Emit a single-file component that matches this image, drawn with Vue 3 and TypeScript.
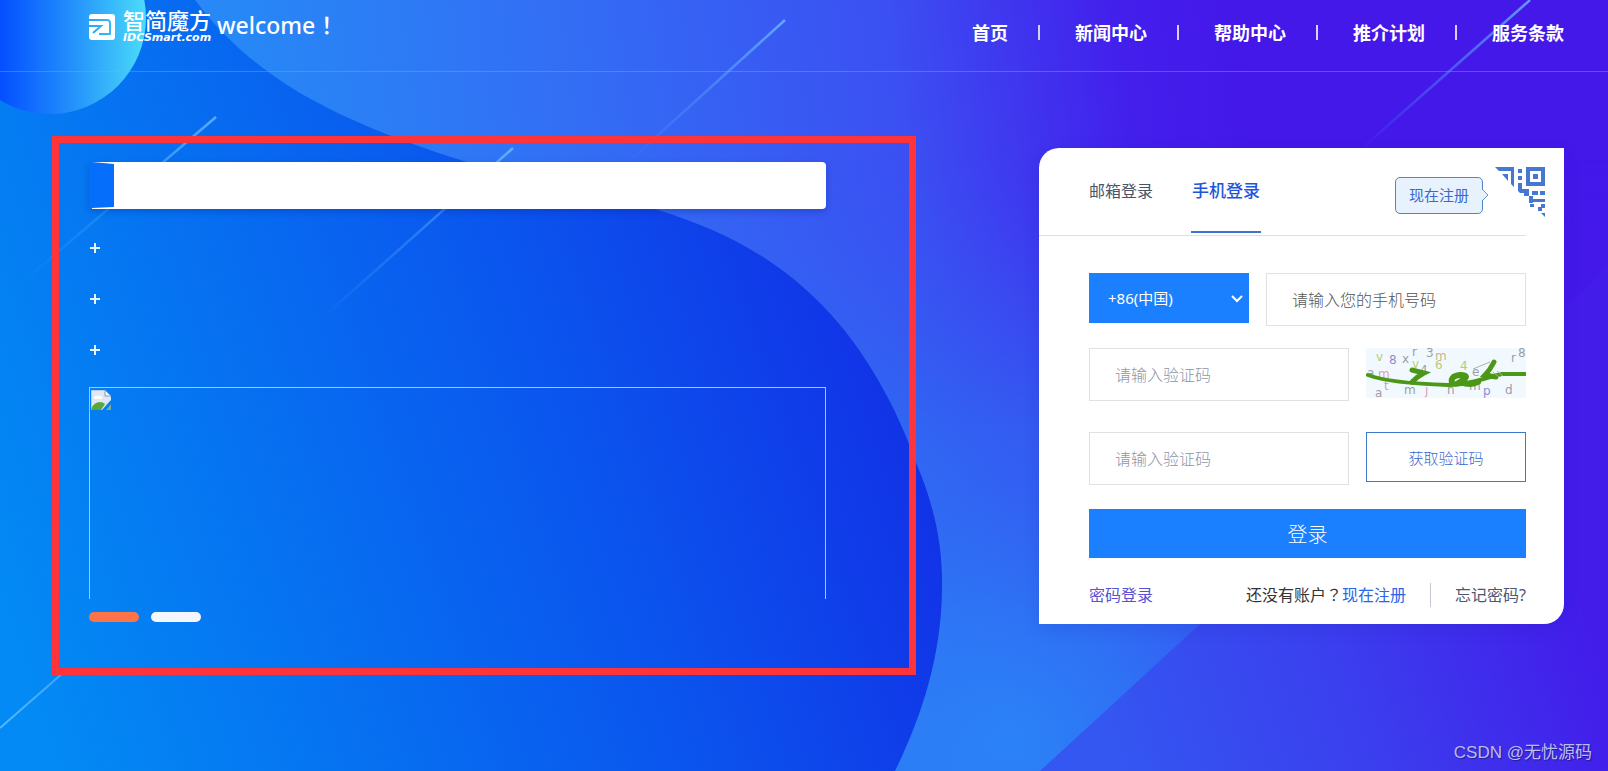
<script setup lang="ts">
import { ref } from 'vue'

const navItems: string[] = ['首页', '新闻中心', '帮助中心', '推介计划', '服务条款']
const features: number[] = [1, 2, 3]
const tab = ref<'email' | 'phone'>('phone')
const region = ref('86')
const phone = ref('')
const imageCode = ref('')
const smsCode = ref('')
const slide = ref(0)
</script>

<template>
  <div class="page">
    <svg class="backdrop" viewBox="0 0 1608 771" preserveAspectRatio="none" aria-hidden="true">
      <defs>
        <linearGradient id="sky" gradientUnits="userSpaceOnUse" x1="700" y1="800" x2="1350" y2="250">
          <stop offset="0" stop-color="#2491f8" />
          <stop offset="0.25" stop-color="#2b80f5" />
          <stop offset="0.42" stop-color="#2f6af3" />
          <stop offset="0.66" stop-color="#3753f1" />
          <stop offset="1" stop-color="#4319ea" />
        </linearGradient>
        <linearGradient id="skyTop" gradientUnits="userSpaceOnUse" x1="250" y1="150" x2="1240" y2="20">
          <stop offset="0" stop-color="#2788f6" />
          <stop offset="0.3" stop-color="#3270f5" />
          <stop offset="0.65" stop-color="#3b50f2" />
          <stop offset="0.88" stop-color="#431fec" />
          <stop offset="1" stop-color="#4318e9" />
        </linearGradient>
        <linearGradient id="fadeDown" x1="0" y1="0" x2="0" y2="1">
          <stop offset="0" stop-color="#fff" />
          <stop offset="0.2" stop-color="#fff" />
          <stop offset="0.55" stop-color="#000" />
        </linearGradient>
        <mask id="topMask"><rect width="1608" height="771" fill="url(#fadeDown)" /></mask>
        <linearGradient id="sea" gradientUnits="userSpaceOnUse" x1="0" y1="600" x2="880" y2="300">
          <stop offset="0" stop-color="#038af4" />
          <stop offset="0.3" stop-color="#0672f1" />
          <stop offset="0.65" stop-color="#0b54ee" />
          <stop offset="1" stop-color="#1231e6" />
        </linearGradient>
        <linearGradient id="corner" gradientUnits="userSpaceOnUse" x1="1100" y1="700" x2="1560" y2="540">
          <stop offset="0" stop-color="#3456f1" />
          <stop offset="0.5" stop-color="#3b3eee" />
          <stop offset="1" stop-color="#431cea" />
        </linearGradient>
        <linearGradient id="orb" x1="0.25" y1="0.5" x2="1" y2="0.5">
          <stop offset="0" stop-color="#0450ff" />
          <stop offset="0.5" stop-color="#2492fb" />
          <stop offset="1" stop-color="#4bdcfa" />
        </linearGradient>
        <linearGradient id="streak" x1="1" y1="0" x2="0" y2="1">
          <stop offset="0" stop-color="#6fc4ff" stop-opacity="0.75" />
          <stop offset="0.5" stop-color="#57a8ff" stop-opacity="0.4" />
          <stop offset="1" stop-color="#57a8ff" stop-opacity="0" />
        </linearGradient>
        <linearGradient id="streakLow" x1="1" y1="0" x2="0" y2="1">
          <stop offset="0" stop-color="#6fc4ff" stop-opacity="0.5" />
          <stop offset="1" stop-color="#6fc4ff" stop-opacity="0.8" />
        </linearGradient>
        <radialGradient id="glow" gradientUnits="userSpaceOnUse" cx="1010" cy="740" r="260">
          <stop offset="0" stop-color="#2b84f8" stop-opacity="0.9" />
          <stop offset="0.5" stop-color="#2d78f6" stop-opacity="0.6" />
          <stop offset="1" stop-color="#2f6af3" stop-opacity="0" />
        </radialGradient>
      </defs>
      <rect width="1608" height="771" fill="url(#sky)" />
      <rect width="1608" height="771" fill="url(#skyTop)" mask="url(#topMask)" />
      <rect width="1608" height="771" fill="url(#glow)" />
      <path d="M1608 260C1596 282 1580 298 1560 308L1200 624L1040 771H1608Z" fill="url(#corner)" />
      <path
        d="M0 0H195C222 36 255 66 300 93C350 122 410 145 480 166C540 184 600 192 655 209C730 232 780 262 823 306C866 350 898 410 917 465C936 510 943 550 942 590C941 660 920 720 895 771H0Z"
        fill="url(#sea)"
      />
      <circle cx="50" cy="18" r="96" fill="url(#orb)" />
      <g stroke="url(#streak)" stroke-width="2.5" fill="none">
        <path d="M785 20L625 165" />
        <path d="M216 117L25 280" />
        <path d="M513 148L320 320" />
        <path d="M1530 0L1360 150" />
      </g>
      <path d="M64 672L0 728" stroke="url(#streakLow)" stroke-width="2" />
    </svg>

    <header class="header">
      <a class="brand" href="#">
        <svg class="mark" viewBox="0 0 26 26" aria-hidden="true">
          <mask id="markCut">
            <rect width="26" height="26" rx="3" fill="#fff" />
            <path d="M0 6H18Q21 6 21 9V20H10" fill="none" stroke="#000" stroke-width="2" />
            <path d="M0 12H12L4 19" fill="none" stroke="#000" stroke-width="2" />
          </mask>
          <rect width="26" height="26" fill="#fff" mask="url(#markCut)" />
        </svg>
        <span class="wordmark">
          <span class="name">智简魔方</span>
          <span class="domain">IDCSmart.com</span>
        </span>
        <span class="welcome">welcome！</span>
      </a>
      <nav class="nav">
        <a v-for="item in navItems" :key="item" href="#">{{ item }}</a>
      </nav>
    </header>

    <main class="main">
      <section class="promo">
        <div class="title-bar">
          <svg viewBox="0 0 25 47" preserveAspectRatio="none" aria-hidden="true">
            <path d="M0 0H3L25 2V45L3 46V47H0Z" fill="#056ffb" />
          </svg>
        </div>
        <ul class="features">
          <li v-for="f in features" :key="f">
            <svg viewBox="0 0 10 10" aria-hidden="true"><path d="M5 0V10M0 5H10" stroke="#e4f6ff" stroke-width="2" /></svg>
          </li>
        </ul>
        <div class="picture">
          <svg viewBox="0 0 20 20" aria-hidden="true">
            <path d="M0 0H14L20 6V10L11 20H0Z" fill="#d5e4f7" />
            <path d="M1 1H13V7H19V10L12 13L1 15Z" fill="#e0e8f6" />
            <path d="M3 8Q4 5 7 6Q9 4 11 7Q12 9 9 9H4Z" fill="#fff" />
            <path d="M0 19Q3 12 9 12Q12 12 14 14L10 20H0Z" fill="#5aa83b" />
            <path d="M14 0V6H20Z" fill="#fff" stroke="#7f9cbd" />
            <path d="M15 20L20 14V20Z" fill="#75ae8d" />
            <path d="M0 20V0H13" fill="none" stroke="#9fb4cf" />
          </svg>
        </div>
        <div class="dots">
          <button v-for="n in 2" :key="n" type="button" :class="{ on: slide === n - 1 }" :aria-label="`第${n}张`" @click="slide = n - 1"></button>
        </div>
      </section>

      <section class="card">
        <div class="card-head">
          <div class="tabs">
            <button type="button" :class="{ active: tab === 'email' }" @click="tab = 'email'">邮箱登录</button>
            <button type="button" :class="{ active: tab === 'phone' }" @click="tab = 'phone'">手机登录</button>
          </div>
          <a class="register" href="#">
            现在注册
            <svg viewBox="0 0 7 14" aria-hidden="true"><path d="M0 1L6 7L0 13" fill="#e8f2fd" stroke="#5c94d8" /></svg>
          </a>
        </div>
        <svg class="qr" viewBox="0 0 50 50" aria-hidden="true">
          <g fill="#4678d2">
            <path d="M0 0H19V20L16 17V4H4Z" />
            <path d="M7 7H13V14Z" />
            <path d="M23 2H27V6H23ZM23 9H27V13H23ZM23 16H27V20H23Z" />
            <path d="M31 0H50V19H31ZM35 4V15H46V4Z" fill-rule="evenodd" />
            <path d="M38 7H43V12H38Z" />
            <path d="M23 18H27V22H34V29H29V26H25L23 24Z" />
            <path d="M37 24H43V28H37ZM45 24H50V28H45ZM34 29H38V32H50V35H38V36H34Z" />
            <path d="M35 37H39V40H35ZM46 37H50V41H47V44H43V40H46ZM46 46H50V50Z" />
          </g>
        </svg>

        <form class="form" @submit.prevent>
          <div class="row">
            <div class="select">
              <select v-model="region" aria-label="国家或地区">
                <option value="86">+86(中国)</option>
              </select>
              <svg viewBox="0 0 12 8" aria-hidden="true"><path d="M1 1L6 6L11 1" fill="none" stroke="#fff" stroke-width="2" /></svg>
            </div>
            <input v-model="phone" class="dark" type="tel" placeholder="请输入您的手机号码" aria-label="手机号码" />
          </div>
          <div class="row">
            <input v-model="imageCode" type="text" placeholder="请输入验证码" aria-label="图形验证码" />
            <svg class="captcha" viewBox="0 0 160 50" role="img" aria-label="验证码图片">
              <rect width="160" height="50" fill="#f2f9fe" />
              <g font-family="DejaVu Sans, sans-serif" font-size="12">
                <g fill="#b5cc73"><text x="10" y="13">v</text><text x="46" y="20">v</text><text x="69" y="21">6</text><text x="94" y="22">4</text></g>
                <g fill="#8d8ed3"><text x="23" y="16">8</text><text x="117" y="47">p</text></g>
                <g fill="#9a9da8"><text x="36" y="15">x</text><text x="46" y="8">r</text><text x="60" y="9">3</text><text x="54" y="26">4</text><text x="1" y="29">a</text><text x="9" y="49">a</text><text x="38" y="46">m</text><text x="81" y="46">n</text><text x="106" y="28">e</text><text x="139" y="46">d</text><text x="145" y="14">r</text><text x="152" y="9">8</text><text x="103" y="42">m</text></g>
                <g fill="#dba0b4"><text x="12" y="30">m</text><text x="18" y="42">t</text><text x="59" y="46">j</text></g>
                <text x="69" y="12" fill="#c6b78a">m</text>
              </g>
              <g fill="none" stroke="#4b9818" stroke-linecap="round">
                <path d="M2 27C18 33 50 36 82 37C106 37 120 29 136 26H160" stroke-width="4" />
                <path d="M46 22L58 25Q52 28 46 34" stroke-width="5" />
                <path d="M86 35Q84 28 94 27Q106 27 94 34Q105 38 112 34" stroke-width="6" />
                <path d="M128 14Q124 22 119 27Q125 28 130 29" stroke-width="5" />
              </g>
              <path d="M127 24L133 29M131 23L137 28M107 21L124 14" stroke="#9ebba0" />
            </svg>
          </div>
          <div class="row last">
            <input v-model="smsCode" type="text" placeholder="请输入验证码" aria-label="短信验证码" />
            <button class="send" type="button">获取验证码</button>
          </div>
          <button class="submit" type="submit">登录</button>
          <div class="links">
            <a class="pwd" href="#">密码登录</a>
            <span class="ask">还没有账户<span class="centered">？</span><a href="#">现在注册</a></span>
            <a class="forgot" href="#">忘记密码?</a>
          </div>
        </form>
      </section>
    </main>
    <p class="credit">CSDN @无忧源码</p>
  </div>
</template>

<style>
body {
  background: #0a6cf0;
}
</style>

<style scoped>
.page {
  position: relative;
  min-height: 100vh;
  overflow: hidden;
  font-family: "Noto Sans", "Noto Sans CJK SC", sans-serif;
  color: #fff;
}
.page *,
.page {
  box-sizing: border-box;
}
a {
  color: inherit;
  text-decoration: none;
}
button,
input,
select {
  font-family: inherit;
  margin: 0;
  border-radius: 0;
}
button {
  border: 0;
  cursor: pointer;
}
svg {
  display: block;
}
.backdrop {
  position: absolute;
  inset: 0;
  width: 100%;
  height: 100%;
}
.header {
  position: relative;
  display: flex;
  justify-content: space-between;
  height: 72px;
  padding: 0 44px 0 89px;
  border-bottom: 1px solid rgba(140, 160, 255, 0.4);
}
.brand {
  display: flex;
  align-items: flex-start;
  padding-top: 10px;
}
.mark {
  width: 26px;
  height: 26px;
  margin: 4px 8px 0 0;
}
.wordmark {
  display: flex;
  flex-direction: column;
  width: 92px;
}
.name {
  font-size: 22px;
  line-height: 20px;
  font-weight: 500;
}
.domain {
  font: italic bold 11px/16px "DejaVu Sans", sans-serif;
}
.welcome {
  margin: 2px 0 0 2px;
  font-family: "Noto Sans", "Noto Sans CJK TC", sans-serif;
  font-size: 23px;
  line-height: 26px;
  font-weight: 500;
}
.nav {
  display: flex;
  align-items: flex-start;
  padding-top: 19px;
  font-family: "Noto Sans CJK SC", sans-serif;
  font-size: 18px;
  line-height: 26px;
  font-weight: 700;
}
.nav a {
  display: flex;
  align-items: center;
  height: 26px;
}
.nav a + a::before {
  content: "";
  width: 2px;
  height: 15px;
  margin: 0 35px 0 30px;
  background: #d6d0fb;
}
.main {
  position: relative;
  display: grid;
  grid-template-columns: minmax(0, 1fr) 525px;
  column-gap: 123px;
  align-items: start;
  padding: 64px 44px 0 52px;
}
.promo {
  padding: 19px 83px 46px 30px;
  border: 7px solid #fd353b;
}
.title-bar {
  height: 47px;
  background: #fff;
  border-radius: 4px;
  box-shadow: 0 3px 6px rgba(0, 40, 140, 0.3);
}
.title-bar svg {
  width: 25px;
  height: 47px;
}
.features {
  margin: 13px 0 12px;
  padding: 0 0 0 1px;
  list-style: none;
}
.features li {
  display: flex;
  align-items: center;
  height: 51px;
}
.features svg {
  width: 10px;
  height: 10px;
}
.picture {
  height: 212px;
  padding: 2px 1px;
  border: 1px solid #a9c6ef;
  border-bottom: 0;
}
.picture svg {
  width: 20px;
  height: 20px;
}
.dots {
  display: flex;
  gap: 12px;
  margin-top: 13px;
}
.dots button {
  width: 50px;
  height: 10px;
  padding: 0;
  border-radius: 5px;
  background: #f3f6fb;
}
.dots button.on {
  background: #ff7348;
}
.card {
  position: relative;
  margin-top: 12px;
  background: #fff;
  border-radius: 20px 0 20px 0;
  color: #333;
  box-shadow: 0 4px 16px rgba(30, 30, 160, 0.15);
}
.card-head {
  display: flex;
  justify-content: space-between;
  align-items: flex-start;
  height: 88px;
  margin-right: 38px;
  padding: 0 43px 0 50px;
  border-bottom: 1px solid #dcdfe3;
}
.tabs {
  display: flex;
  gap: 38px;
}
.tabs button {
  height: 85px;
  padding: 0 1px;
  background: none;
  border-bottom: 2px solid transparent;
  font-size: 16px;
  color: #4a5468;
}
.tabs button:first-child {
  padding: 0;
}
.tabs .active {
  font-size: 17px;
  font-weight: 500;
  color: #1d56dc;
  border-color: #3d73d1;
}
.register {
  position: relative;
  margin-top: 29px;
  padding: 0 13px;
  border: 1px solid #4d86c9;
  border-radius: 5px;
  background: #e8f2fd;
  font-size: 15px;
  line-height: 35px;
  color: #3a68d2;
}
.register svg {
  position: absolute;
  left: 100%;
  top: 10px;
  width: 7px;
  height: 14px;
}
.qr {
  position: absolute;
  top: 19px;
  right: 19px;
  width: 50px;
  height: 50px;
}
.form {
  padding: 37px 38px 17px 50px;
}
.row {
  display: flex;
  gap: 17px;
  align-items: flex-start;
  margin-bottom: 22px;
}
.row + .row {
  margin-bottom: 31px;
}
.row.last {
  margin-bottom: 24px;
}
.row > input {
  flex: 1;
  min-width: 0;
  height: 53px;
  padding: 0 25px;
  border: 1px solid #dfe1e6;
  background: #fff;
  font-size: 16px;
  font-weight: 300;
  color: #444;
}
input::placeholder {
  color: #8f95a6;
  opacity: 1;
}
input.dark::placeholder {
  color: #555;
}
.select {
  position: relative;
  width: 160px;
}
select {
  display: block;
  width: 100%;
  height: 50px;
  padding: 0 19px;
  appearance: none;
  border: 0;
  background: #1b80ff;
  color: #fff;
  font-size: 15px;
}
.select svg {
  position: absolute;
  right: 6px;
  top: 22px;
  width: 12px;
  height: 8px;
  pointer-events: none;
}
.captcha {
  width: 160px;
  height: 50px;
}
.send {
  width: 160px;
  height: 50px;
  background: #fff;
  border: 1px solid #3f78cc;
  color: #3a68d2;
  font-size: 15px;
  font-weight: 300;
}
.submit {
  display: block;
  width: 100%;
  height: 49px;
  background: #1b80ff;
  color: #fff;
  font-size: 20px;
  font-weight: 300;
}
.links {
  display: flex;
  align-items: center;
  height: 24px;
  margin-top: 25px;
  font-size: 16px;
  line-height: 24px;
}
.pwd {
  margin-right: auto;
  color: #5850d6;
}
.ask .centered {
  font-family: "Noto Sans CJK TC", sans-serif;
  line-height: 1;
}
.ask a {
  color: #2a66e8;
}
.forgot {
  margin-left: 24px;
  padding-left: 24px;
  border-left: 1px solid #c4c8d0;
  color: #4f5674;
}
.credit {
  position: absolute;
  right: 16px;
  bottom: 6px;
  margin: 0;
  font: 17px/24px "Liberation Sans", "Noto Sans CJK SC", sans-serif;
  color: #b9bdf6;
  text-shadow: 1px 1px 1px rgba(20, 20, 80, 0.6);
}
</style>
